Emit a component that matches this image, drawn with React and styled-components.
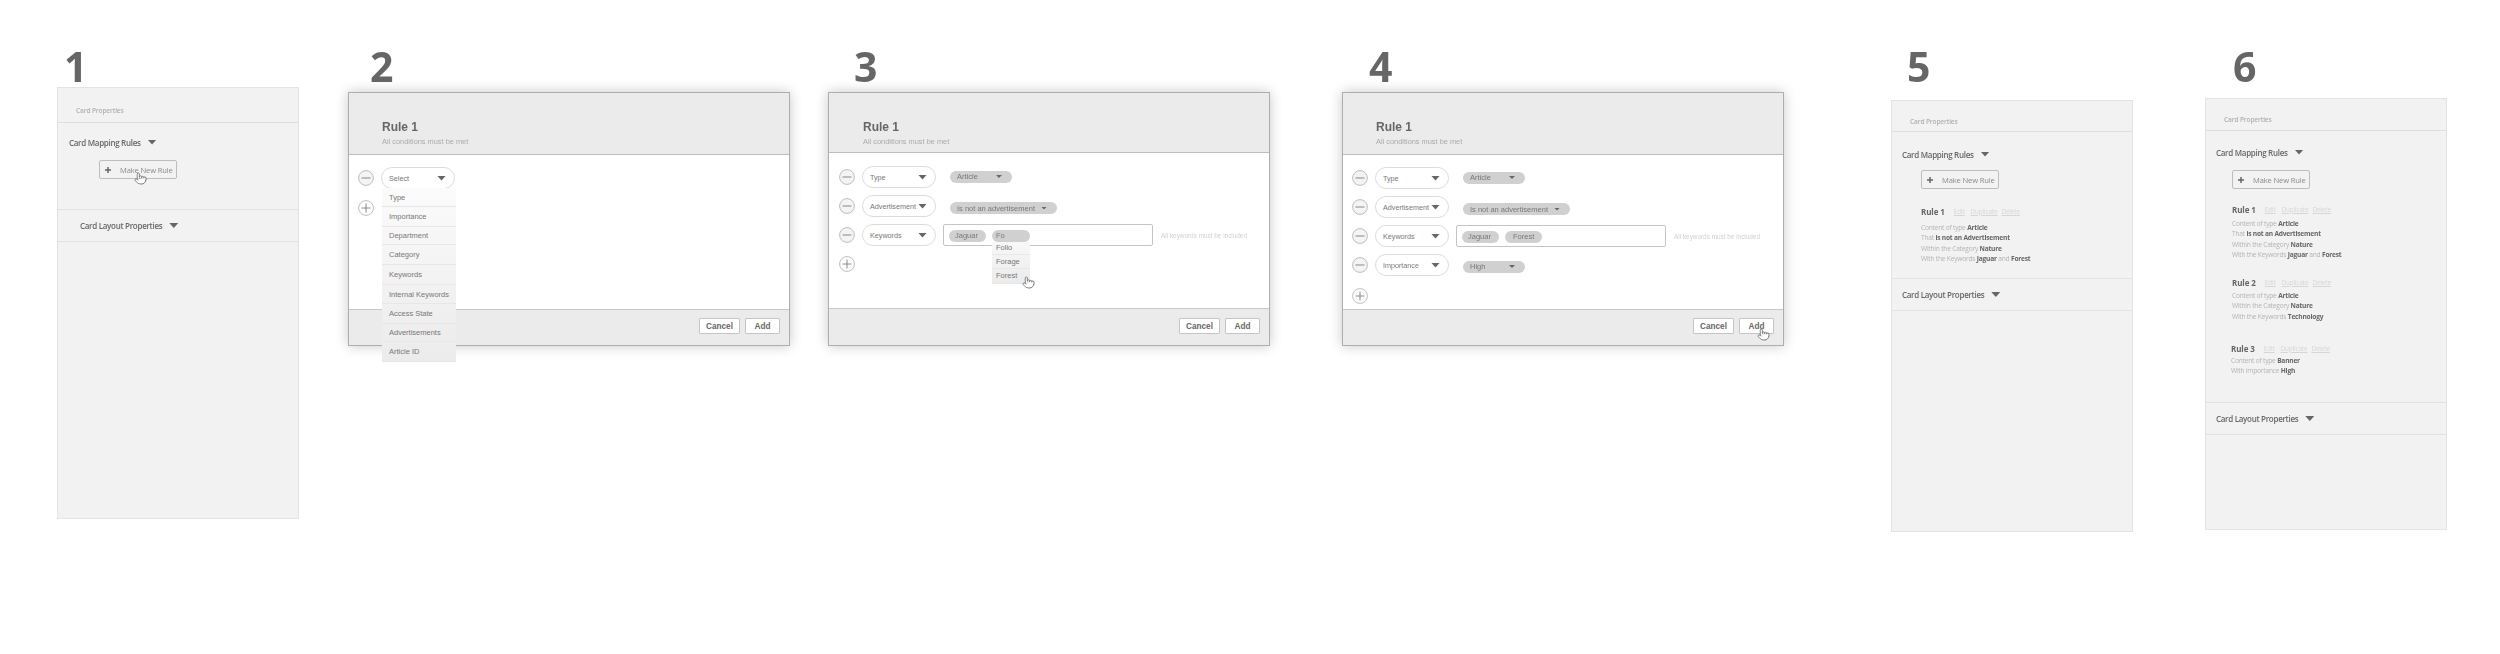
import styled, { createGlobalStyle } from "styled-components";
import { Pointer } from "lucide-react";

const GlobalStyle = createGlobalStyle`
  html, body {
    margin: 0;
    background: #fff;
    overflow: hidden;
  }
`;

const Page = styled.div`
  display: grid;
  grid-template-columns: 291px 480px 514px 549px 314px 295px;
  width: 2500px;
  height: 654px;
  box-sizing: border-box;
  padding-left: 57px;
  padding-top: 45px;
  filter: blur(0.4px);
`;

const Step = styled.section`
  display: flex;
  flex-direction: column;
`;

const Number = styled.div`
  height: ${(p) => p.$height}px;
  padding-left: ${(p) => p.$left}px;
  font-family: "Open Sans", sans-serif;
  font-weight: 700;
  font-size: 41px;
  line-height: 42px;
  color: #666;
`;

/* side panel */
const Panel = styled.div`
  width: 242px;
  height: 432px;
  box-sizing: border-box;
  background: #f2f2f2;
  border: 1px solid #e3e3e3;
  font-family: "Open Sans", sans-serif;
  color: #666;
`;

const PanelHeader = styled.div`
  display: flex;
  align-items: center;
  height: ${(p) => p.$height}px;
  box-sizing: border-box;
  padding: 10px 0 0 18px;
  border-bottom: 1px solid #dedede;
  font-size: 6.6px;
  font-weight: 600;
  letter-spacing: -0.15px;
  color: #b0b0b0;
`;

const Mapping = styled.div`
  height: ${(p) => p.$height}px;
  box-sizing: border-box;
  padding-top: ${(p) => p.$top}px;
  border-bottom: 1px solid #e2e2e2;
`;

const SectionTitle = styled.div`
  display: flex;
  align-items: center;
  gap: 7px;
  height: 14px;
  padding-left: ${(p) => p.$left}px;
  font-size: 8px;
  font-weight: 600;
  letter-spacing: -0.3px;
  color: #666;
`;

const LayoutRow = styled.div`
  display: flex;
  align-items: center;
  height: 32px;
  box-sizing: border-box;
  border-bottom: 1px solid #e2e2e2;
`;

const Caret = styled.span`
  display: inline-block;
  flex: none;
  width: ${(p) => p.$w}px;
  height: ${(p) => p.$h}px;
  background: #666;
  clip-path: polygon(0 0, 100% 0, 50% 100%);
`;

const NewRule = styled.div`
  position: relative;
  display: flex;
  align-items: center;
  width: 78px;
  height: 19px;
  box-sizing: border-box;
  margin: ${(p) => p.$top}px 0 0 ${(p) => p.$left}px;
  padding-left: 4px;
  gap: 8px;
  background: #f2f2f2;
  border: 1px solid #bdbdbd;
  border-radius: 2px;
  font-size: 7.6px;
  letter-spacing: -0.15px;
  white-space: nowrap;
  color: #8a8a8a;
`;

const PlusMark = styled.svg`
  width: 8px;
  height: 8px;
  flex: none;
`;

const HandSlot = styled.span`
  position: absolute;
  left: ${(p) => p.$left}px;
  top: ${(p) => p.$top}px;
  display: flex;
  line-height: 0;
`;

const Rule = styled.div`
  margin: ${(p) => p.$top}px 0 0 ${(p) => p.$left}px;
`;

const RuleHead = styled.div`
  display: flex;
  align-items: center;
  height: 12px;
  margin-bottom: ${(p) => p.$gap}px;
  font-size: 8px;
  font-weight: 700;
  letter-spacing: -0.1px;
  color: #666;
`;

const RuleLink = styled.span`
  margin-left: ${(p) => p.$gap}px;
  font-size: 6.3px;
  font-weight: 400;
  color: #d6d6d6;
  text-decoration: underline;
`;

const RuleLine = styled.div`
  height: 10.3px;
  line-height: 10.3px;
  font-size: 6.6px;
  letter-spacing: -0.2px;
  color: #b3b3b3;
  white-space: nowrap;

  b {
    font-weight: 700;
    color: #666;
  }
`;

/* dialog */
const Dialog = styled.div`
  display: flex;
  flex-direction: column;
  width: 442px;
  height: 254px;
  box-sizing: border-box;
  border: 1px solid #aeaeae;
  background: #fff;
  box-shadow: 0 0 12px rgba(0, 0, 0, 0.22);
  font-family: "Liberation Sans", sans-serif;
  color: #666;
`;

const DialogHeader = styled.div`
  height: ${(p) => p.$height}px;
  flex: none;
  box-sizing: border-box;
  padding: 27px 0 0 ${(p) => p.$left}px;
  background: #ebebeb;
  border-bottom: 1px solid #bdbdbd;
`;

const Title = styled.div`
  font-size: 12px;
  font-weight: 700;
  line-height: 15px;
  color: #666;
`;

const Subtitle = styled.div`
  margin-top: 1px;
  font-size: 7.4px;
  line-height: 11px;
  color: #aaa;
`;

const DialogBody = styled.div`
  position: relative;
  flex: 1;
  display: flex;
  flex-direction: column;
  gap: ${(p) => p.$gap}px;
  padding: ${(p) => p.$top}px 0 0 ${(p) => p.$left}px;
`;

const Row = styled.div`
  display: flex;
  align-items: center;
  height: 22px;
`;

const RoundIcon = styled.svg`
  width: 16px;
  height: 16px;
  flex: none;
  margin-top: ${(p) => p.$top || 0}px;
`;

const SelectWrap = styled.div`
  position: relative;
  margin-left: 7px;
  flex: none;
`;

const SelectBox = styled.div`
  display: flex;
  align-items: center;
  justify-content: space-between;
  width: 74px;
  height: 22px;
  box-sizing: border-box;
  padding: 0 8px 0 7px;
  background: #fff;
  border: 1px solid #dcdcdc;
  border-radius: 11px;
  font-size: 7.2px;
  color: #777;
`;

const Menu = styled.div`
  position: absolute;
  left: 1px;
  top: 21px;
  width: 74px;
  background: linear-gradient(#fbfbfb, #ebebeb);
  z-index: 2;
`;

const MenuItem = styled.div`
  display: flex;
  align-items: center;
  height: ${(p) => p.$height}px;
  box-sizing: border-box;
  padding-left: 7px;
  border-bottom: 1px solid #e7e7e7;
  font-size: 7.5px;
  color: #777;
`;

const ValuePill = styled.div`
  display: flex;
  align-items: center;
  justify-content: space-between;
  width: ${(p) => p.$width}px;
  height: 12px;
  box-sizing: border-box;
  margin: ${(p) => p.$top || 0}px 0 0 14px;
  padding: 0 10px 0 7px;
  background: #d0d0d0;
  border-radius: 6px;
  font-size: 7.5px;
  color: #777;
`;

const KeywordBox = styled.div`
  display: flex;
  align-items: center;
  gap: 6px;
  width: 210px;
  height: 22px;
  box-sizing: border-box;
  margin-left: 7px;
  padding: 2px 0 0 5px;
  background: #fff;
  border: 1px solid #c4c4c4;
  border-radius: 2px;
`;

const Keyword = styled.div`
  position: relative;
  width: ${(p) => p.$width}px;
  height: 12px;
  flex: none;
  box-sizing: border-box;
  padding-left: ${(p) => p.$pad}px;
  line-height: 12px;
  background: #d0d0d0;
  border-radius: 6px;
  font-size: 7.5px;
  color: #777;
`;

const Suggest = styled.div`
  position: absolute;
  left: 0;
  top: 12px;
  width: 100%;
  background: linear-gradient(#f8f8f8, #ebebeb);
  z-index: 2;
`;

const SuggestItem = styled.div`
  height: ${(p) => p.$height}px;
  line-height: ${(p) => p.$height}px;
  padding-left: 4px;
  border-bottom: 1px solid #e8e8e8;
  font-size: 7.5px;
  color: #777;
`;

const Hint = styled.div`
  margin-left: 8px;
  font-size: 6.4px;
  color: #d0d0d0;
  white-space: nowrap;
`;

const DialogFooter = styled.div`
  display: flex;
  align-items: flex-end;
  justify-content: flex-end;
  gap: 5px;
  height: ${(p) => p.$height}px;
  flex: none;
  box-sizing: border-box;
  padding: 0 9px 11px 0;
  background: #ebebeb;
  border-top: 1px solid #c8c8c8;
`;

const FooterButton = styled.div`
  position: relative;
  display: flex;
  align-items: center;
  justify-content: center;
  width: ${(p) => p.$width}px;
  height: 16px;
  box-sizing: border-box;
  background: #fff;
  border: 1px solid #c4c4c4;
  border-radius: 1px;
  font-size: 8.2px;
  font-weight: 700;
  color: #666;
`;

const Hand = ({ left, top }) => (
  <HandSlot $left={left} $top={top}>
    <Pointer size={13} color="#666" fill="#fff" strokeWidth={1.5} />
  </HandSlot>
);

const PlusGlyph = () => (
  <PlusMark viewBox="0 0 8 8">
    <path d="M4 1v6M1 4h6" stroke="#666" strokeWidth="1.5" />
  </PlusMark>
);

const RoundMinus = () => (
  <RoundIcon viewBox="0 0 16 16">
    <circle cx="8" cy="8" r="7.4" fill="#f4f4f4" stroke="#bdbdbd" />
    <path d="M3.5 8h9" stroke="#888" strokeWidth="1" />
  </RoundIcon>
);

const RoundPlus = ({ top }) => (
  <RoundIcon viewBox="0 0 16 16" $top={top}>
    <circle cx="8" cy="8" r="7.4" fill="#fff" stroke="#bdbdbd" />
    <path d="M3.5 8h9M8 3.5v9" stroke="#888" strokeWidth="1" />
  </RoundIcon>
);

const Select = ({ label, children }) => (
  <SelectWrap>
    <SelectBox>
      {label}
      <Caret $w={9} $h={5} />
    </SelectBox>
    {children}
  </SelectWrap>
);

const Links = () => (
  <>
    <RuleLink $gap={9}>Edit</RuleLink>
    <RuleLink $gap={6}>Duplicate</RuleLink>
    <RuleLink $gap={4}>Delete</RuleLink>
  </>
);

const menuItems = [
  ["Type", 19],
  ["Importance", 20],
  ["Department", 18],
  ["Category", 20],
  ["Keywords", 20],
  ["Internal Keywords", 19],
  ["Access State", 20],
  ["Advertisements", 18],
  ["Article ID", 20],
];

const SidePanel = ({ headerH, mapH, mapTop, mapLeft, layoutLeft, btnTop, btnLeft, hand, children }) => (
  <Panel>
    <PanelHeader $height={headerH}>Card Properties</PanelHeader>
    <Mapping $height={mapH} $top={mapTop}>
      <SectionTitle $left={mapLeft}>
        Card Mapping Rules <Caret $w={9} $h={5} />
      </SectionTitle>
      <NewRule $top={btnTop} $left={btnLeft}>
        <PlusGlyph />
        Make New Rule
        {hand && <Hand left={34} top={11} />}
      </NewRule>
      {children}
    </Mapping>
    <LayoutRow>
      <SectionTitle $left={layoutLeft}>
        Card Layout Properties <Caret $w={9} $h={5} />
      </SectionTitle>
    </LayoutRow>
  </Panel>
);

const TypeRow = () => (
  <Row>
    <RoundMinus />
    <Select label="Type" />
    <ValuePill $width={62} $top={-1}>
      Article <Caret $w={6} $h={3} />
    </ValuePill>
  </Row>
);

const AdRow = () => (
  <Row>
    <RoundMinus />
    <Select label="Advertisement" />
    <ValuePill $width={107} $top={4}>
      Is not an advertisement <Caret $w={6} $h={3} />
    </ValuePill>
  </Row>
);

const DialogFoot = ({ height, hand }) => (
  <DialogFooter $height={height}>
    <FooterButton $width={41}>Cancel</FooterButton>
    <FooterButton $width={35}>
      Add
      {hand && <Hand left={17} top={9} />}
    </FooterButton>
  </DialogFooter>
);

const DialogTop = ({ height, left }) => (
  <DialogHeader $height={height} $left={left}>
    <Title>Rule 1</Title>
    <Subtitle>All conditions must be met</Subtitle>
  </DialogHeader>
);

const App = () => {
  return (
    <Page>
      <GlobalStyle />

      <Step>
        <Number $height={42} $left={7}>1</Number>
        <SidePanel headerH={35} mapH={87} mapTop={12} mapLeft={11} layoutLeft={22} btnTop={11} btnLeft={41} hand />
      </Step>

      <Step>
        <Number $height={47} $left={22}>2</Number>
        <Dialog>
          <DialogTop height={62} left={33} />
          <DialogBody $gap={8} $top={12} $left={9}>
            <Row>
              <RoundMinus />
              <Select label="Select">
                <Menu>
                  {menuItems.map(([name, h]) => (
                    <MenuItem key={name} $height={h}>{name}</MenuItem>
                  ))}
                </Menu>
              </Select>
            </Row>
            <Row>
              <RoundPlus />
            </Row>
          </DialogBody>
          <DialogFoot height={36} />
        </Dialog>
      </Step>

      <Step>
        <Number $height={47} $left={26}>3</Number>
        <Dialog>
          <DialogTop height={60} left={34} />
          <DialogBody $gap={7} $top={13} $left={10}>
            <TypeRow />
            <AdRow />
            <Row>
              <RoundMinus />
              <Select label="Keywords" />
              <KeywordBox>
                <Keyword $width={37} $pad={6}>Jaguar</Keyword>
                <Keyword $width={38} $pad={4}>
                  Fo
                  <Suggest>
                    <SuggestItem $height={12}>Folio</SuggestItem>
                    <SuggestItem $height={13}>Forage</SuggestItem>
                    <SuggestItem $height={14}>Forest</SuggestItem>
                    <Hand left={30} top={34} />
                  </Suggest>
                </Keyword>
              </KeywordBox>
              <Hint>All keywords must be included</Hint>
            </Row>
            <Row>
              <RoundPlus />
            </Row>
          </DialogBody>
          <DialogFoot height={37} />
        </Dialog>
      </Step>

      <Step>
        <Number $height={47} $left={27}>4</Number>
        <Dialog>
          <DialogTop height={62} left={33} />
          <DialogBody $gap={7} $top={12} $left={9}>
            <TypeRow />
            <AdRow />
            <Row>
              <RoundMinus />
              <Select label="Keywords" />
              <KeywordBox>
                <Keyword $width={37} $pad={6}>Jaguar</Keyword>
                <Keyword $width={37} $pad={8}>Forest</Keyword>
              </KeywordBox>
              <Hint>All keywords must be included</Hint>
            </Row>
            <Row>
              <RoundMinus />
              <Select label="Importance" />
              <ValuePill $width={62} $top={3}>
                High <Caret $w={6} $h={3} />
              </ValuePill>
            </Row>
            <Row>
              <RoundPlus top={4} />
            </Row>
          </DialogBody>
          <DialogFoot height={36} hand />
        </Dialog>
      </Step>

      <Step>
        <Number $height={55} $left={16}>5</Number>
        <SidePanel headerH={31} mapH={147} mapTop={15} mapLeft={10} layoutLeft={10} btnTop={9} btnLeft={29}>
          <Rule $top={16} $left={29}>
            <RuleHead $gap={6}>Rule 1<Links /></RuleHead>
            <RuleLine>Content of type <b>Article</b></RuleLine>
            <RuleLine>That <b>is not an Advertisement</b></RuleLine>
            <RuleLine>Within the Category <b>Nature</b></RuleLine>
            <RuleLine>With the Keywords <b>Jaguar</b> and <b>Forest</b></RuleLine>
          </Rule>
        </SidePanel>
      </Step>

      <Step>
        <Number $height={53} $left={28}>6</Number>
        <SidePanel headerH={32} mapH={272} mapTop={14} mapLeft={10} layoutLeft={10} btnTop={11} btnLeft={26}>
          <Rule $top={14} $left={26}>
            <RuleHead $gap={4}>Rule 1<Links /></RuleHead>
            <RuleLine>Content of type <b>Article</b></RuleLine>
            <RuleLine>That <b>is not an Advertisement</b></RuleLine>
            <RuleLine>Within the Category <b>Nature</b></RuleLine>
            <RuleLine>With the Keywords <b>Jaguar</b> and <b>Forest</b></RuleLine>
          </Rule>
          <Rule $top={16} $left={26}>
            <RuleHead $gap={3}>Rule 2<Links /></RuleHead>
            <RuleLine>Content of type <b>Article</b></RuleLine>
            <RuleLine>Within the Category <b>Nature</b></RuleLine>
            <RuleLine>With the Keywords <b>Technology</b></RuleLine>
          </Rule>
          <Rule $top={20} $left={25}>
            <RuleHead $gap={2}>Rule 3<Links /></RuleHead>
            <RuleLine>Content of type <b>Banner</b></RuleLine>
            <RuleLine>With importance <b>High</b></RuleLine>
          </Rule>
        </SidePanel>
      </Step>
    </Page>
  );
};

export default App;
